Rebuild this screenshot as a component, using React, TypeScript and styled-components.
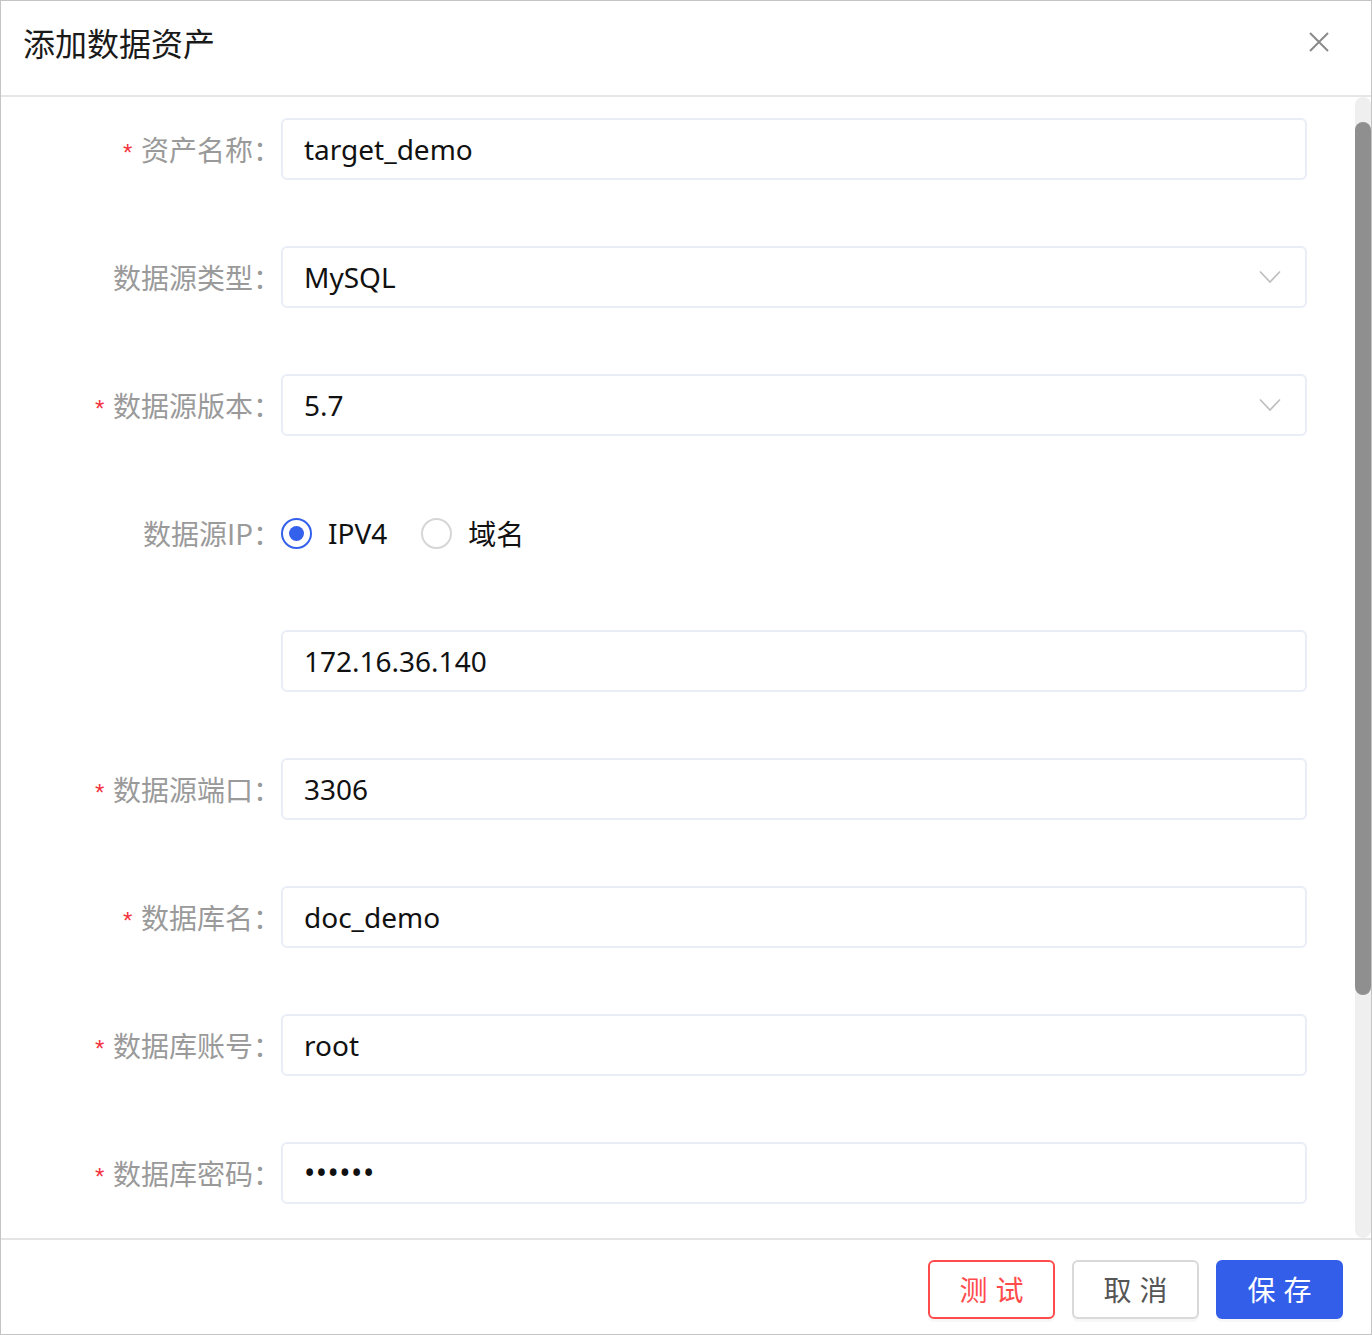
import styled, { createGlobalStyle } from 'styled-components'

const Global = createGlobalStyle`
  html, body { margin: 0; padding: 0; background: #fff; }
  body { font-family: "Noto Sans", "Noto Sans CJK SC", sans-serif; }
  * { box-sizing: border-box; }
`

const Dialog = styled.div`
  width: 1372px;
  height: 1335px;
  border: 1px solid #c4c4c4;
  display: flex;
  flex-direction: column;
  background: #fff;
`

const Header = styled.div`
  height: 96px;
  flex: none;
  border-bottom: 2px solid #e6e6e6;
  display: flex;
  align-items: center;
  justify-content: space-between;
  padding: 0 40px 12px 22px;
`

const Title = styled.div`
  font-family: "Noto Sans CJK SC", sans-serif;
  font-size: 32px;
  color: #1a1a1a;
`

const CloseBtn = styled.div`
  width: 24px;
  height: 24px;
  display: flex;
  align-items: center;
  justify-content: center;
`

const Body = styled.div`
  flex: 1;
  display: flex;
  min-height: 0;
`

const Form = styled.div`
  flex: 1;
  padding: 21px 48px 0 0;
  display: flex;
  flex-direction: column;
  gap: 66px;
`

const Row = styled.div`
  display: flex;
  align-items: center;
  height: 62px;
`

const Label = styled.div`
  width: 280px;
  flex: none;
  padding-right: 0;
  text-align: right;
  font-family: "Noto Sans CJK SC", sans-serif;
  font-size: 28px;
  color: #9a9a9a;
  white-space: nowrap;
`

const Star = styled.span`
  font-family: "Liberation Mono", monospace;
  color: #f5323c;
  font-size: 24px;
  margin-right: 6px;
  position: relative;
  top: 1px;
`

const Field = styled.div`
  flex: 1;
  height: 62px;
  border: 2px solid #e9edf5;
  border-radius: 6px;
  display: flex;
  align-items: center;
  justify-content: space-between;
  padding: 0 24px 0 21px;
  font-size: 28px;
  color: #111;
`

const Dots = styled.span`
  font-size: 30px;
  letter-spacing: 0.5px;
  position: relative;
  top: -1px;
`

const RadioGroup = styled.div`
  display: flex;
  align-items: center;
  gap: 34px;
`

const RadioItem = styled.div`
  display: flex;
  align-items: center;
  gap: 16px;
  font-size: 28px;
  color: #111;
  font-family: "Noto Sans", "Noto Sans CJK SC", sans-serif;
`

const RadioCircle = styled.span<{ $on?: boolean }>`
  width: 31px;
  height: 31px;
  border-radius: 50%;
  border: 2px solid ${p => (p.$on ? '#3461ec' : '#d6d6d6')};
  display: flex;
  align-items: center;
  justify-content: center;
  &::after {
    content: '';
    width: 15px;
    height: 15px;
    border-radius: 50%;
    background: ${p => (p.$on ? '#3461ec' : 'transparent')};
  }
`

const Track = styled.div`
  width: 16px;
  flex: none;
  background: #efefef;
  border-radius: 8px;
  padding-top: 25px;
`

const Thumb = styled.div`
  height: 873px;
  background: #8f8f8f;
  border-radius: 8px;
`

const Footer = styled.div`
  height: 96px;
  flex: none;
  border-top: 2px solid #e4e4e4;
  display: flex;
  align-items: center;
  justify-content: flex-end;
  gap: 17px;
  padding: 4px 28px 0 0;
`

const Button = styled.button<{ $kind: 'danger' | 'default' | 'primary' }>`
  width: 127px;
  height: 59px;
  border-radius: 6px;
  font-family: "Noto Sans CJK SC", sans-serif;
  font-size: 28px;
  letter-spacing: 8px;
  text-indent: 8px;
  cursor: pointer;
  box-shadow: 0 3px 0 rgba(0, 0, 0, 0.03);
  border: 2px solid
    ${p => (p.$kind === 'danger' ? '#ff4b4b' : p.$kind === 'primary' ? '#335eea' : '#d9d9d9')};
  background: ${p => (p.$kind === 'primary' ? '#335eea' : '#fff')};
  color: ${p => (p.$kind === 'danger' ? '#ff4b4b' : p.$kind === 'primary' ? '#fff' : '#555')};
`

const Chevron = () => (
  <svg width="22" height="14" viewBox="0 0 22 14" fill="none">
    <path d="M1 1.5 L11 12 L21 1.5" stroke="#bdbdbd" strokeWidth="1.6" />
  </svg>
)

type Item = { label?: string; req?: boolean; value: string; select?: boolean; pwd?: boolean }

const items: Item[] = [
  { label: '资产名称', req: true, value: 'target_demo' },
  { label: '数据源类型', value: 'MySQL', select: true },
  { label: '数据源版本', req: true, value: '5.7', select: true },
]

const rest: Item[] = [
  { value: '172.16.36.140' },
  { label: '数据源端口', req: true, value: '3306' },
  { label: '数据库名', req: true, value: 'doc_demo' },
  { label: '数据库账号', req: true, value: 'root' },
  { label: '数据库密码', req: true, value: '••••••', pwd: true },
]

function FieldRow({ item }: { item: Item }) {
  return (
    <Row>
      <Label>
        {item.req && <Star>*</Star>}
        {item.label ? `${item.label}：` : ''}
      </Label>
      <Field>
        {item.pwd ? <Dots>{item.value}</Dots> : <span>{item.value}</span>}
        {item.select && <Chevron />}
      </Field>
    </Row>
  )
}

export default function App() {
  return (
    <>
      <Global />
      <Dialog>
        <Header>
          <Title>添加数据资产</Title>
          <CloseBtn>
            <svg width="22" height="22" viewBox="0 0 22 22">
              <path d="M2 2 L20 20 M20 2 L2 20" stroke="#8a8a8a" strokeWidth="2" />
            </svg>
          </CloseBtn>
        </Header>
        <Body>
          <Form>
            {items.map(it => (
              <FieldRow key={it.label} item={it} />
            ))}
            <Row>
              <Label>数据源IP：</Label>
              <RadioGroup>
                <RadioItem>
                  <RadioCircle $on />
                  IPV4
                </RadioItem>
                <RadioItem>
                  <RadioCircle />
                  域名
                </RadioItem>
              </RadioGroup>
            </Row>
            {rest.map((it, i) => (
              <FieldRow key={i} item={it} />
            ))}
          </Form>
          <Track>
            <Thumb />
          </Track>
        </Body>
        <Footer>
          <Button $kind="danger">测试</Button>
          <Button $kind="default">取消</Button>
          <Button $kind="primary">保存</Button>
        </Footer>
      </Dialog>
    </>
  )
}
